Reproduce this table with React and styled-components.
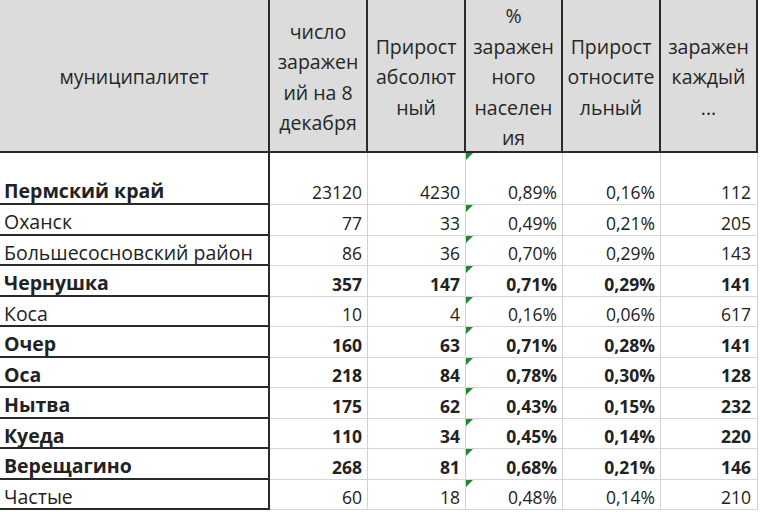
import React from 'react'
import styled, { createGlobalStyle } from 'styled-components'

const Global = createGlobalStyle`
  body {
    margin: 0;
    background: #ffffff;
    font-family: "Open Sans", "Noto Sans", sans-serif;
    color: #1e1e1e;
  }
`

const rows = [
  { name: 'Пермский край', total: '23120', abs: '4230', pct: '0,89%', rel: '0,16%', each: '112', bold: true, nums: false },
  { name: 'Оханск', total: '77', abs: '33', pct: '0,49%', rel: '0,21%', each: '205' },
  { name: 'Большесосновский район', total: '86', abs: '36', pct: '0,70%', rel: '0,29%', each: '143' },
  { name: 'Чернушка', total: '357', abs: '147', pct: '0,71%', rel: '0,29%', each: '141', bold: true, nums: true },
  { name: 'Коса', total: '10', abs: '4', pct: '0,16%', rel: '0,06%', each: '617' },
  { name: 'Очер', total: '160', abs: '63', pct: '0,71%', rel: '0,28%', each: '141', bold: true, nums: true },
  { name: 'Оса', total: '218', abs: '84', pct: '0,78%', rel: '0,30%', each: '128', bold: true, nums: true },
  { name: 'Нытва', total: '175', abs: '62', pct: '0,43%', rel: '0,15%', each: '232', bold: true, nums: true },
  { name: 'Куеда', total: '110', abs: '34', pct: '0,45%', rel: '0,14%', each: '220', bold: true, nums: true },
  { name: 'Верещагино', total: '268', abs: '81', pct: '0,68%', rel: '0,21%', each: '146', bold: true, nums: true },
  { name: 'Частые', total: '60', abs: '18', pct: '0,48%', rel: '0,14%', each: '210' },
]

const headers = [
  ['муниципалитет'],
  ['число', 'заражен', 'ий на 8', 'декабря'],
  ['Прирост', 'абсолют', 'ный'],
  ['%', 'заражен', 'ного', 'населен', 'ия'],
  ['Прирост', 'относите', 'льный'],
  ['заражен', 'каждый', '...'],
]

function App() {
  return (
    <>
      <Global />
      <Sheet>
        {headers.map((lines, i) => (
          <Head key={i}>
            <HeadText>
              {lines.map((l, j) => (
                <div key={j}>{l}</div>
              ))}
            </HeadText>
          </Head>
        ))}
        {rows.map((r, i) => (
          <React.Fragment key={r.name}>
            <NameCell $bold={r.bold} $top={i === 0}>{r.name}</NameCell>
            <NumCell $bold={r.nums} $top={i === 0}>{r.total}</NumCell>
            <NumCell $bold={r.nums} $top={i === 0}>{r.abs}</NumCell>
            <NumCell $bold={r.nums} $top={i === 0}>
              <Flag />
              {r.pct}
            </NumCell>
            <NumCell $bold={r.nums} $top={i === 0}>{r.rel}</NumCell>
            <NumCell $bold={r.nums} $top={i === 0} $last>{r.each}</NumCell>
          </React.Fragment>
        ))}
      </Sheet>
    </>
  )
}

const Sheet = styled.div`
  display: grid;
  grid-template-columns: 270px 98px 98px 97px 98px 97px;
  grid-template-rows: 153px 52px repeat(10, 30.5px);
  width: 760px;
`

const Head = styled.div`
  box-sizing: border-box;
  background: #dcdcdc;
  border-right: 2px solid #2a2a2a;
  border-bottom: 2px solid #2a2a2a;
  display: flex;
  align-items: center;
  justify-content: center;
`

const HeadText = styled.div`
  font-size: 19.5px;
  line-height: 30.5px;
  text-align: center;
  color: #262626;
  margin-top: 4px;
`

const Cell = styled.div`
  box-sizing: border-box;
  position: relative;
  display: flex;
  align-items: ${p => (p.$top ? 'flex-end' : 'center')};
  padding-top: ${p => (p.$top ? '0' : '6px')};
  font-weight: ${p => (p.$bold ? 700 : 400)};
  line-height: ${p => (p.$top ? '24px' : '30px')};
  white-space: nowrap;
  color: #222;
`

const NameCell = styled(Cell)`
  padding-left: 4px;
  font-size: 19.5px;
  border-right: 2px solid #2a2a2a;
  border-bottom: 2px solid #2a2a2a;
`

const NumCell = styled(Cell)`
  justify-content: flex-end;
  padding-right: ${p => (p.$last ? '6px' : '5px')};
  font-size: 17.5px;
  border-right: 1px solid #d3d3d3;
  border-bottom: 1px solid #d6d6d6;
`

const Flag = styled.span`
  position: absolute;
  top: 0;
  left: 0;
  width: 0;
  height: 0;
  border-top: 7px solid #1f8a2c;
  border-right: 7px solid transparent;
`

export default App
